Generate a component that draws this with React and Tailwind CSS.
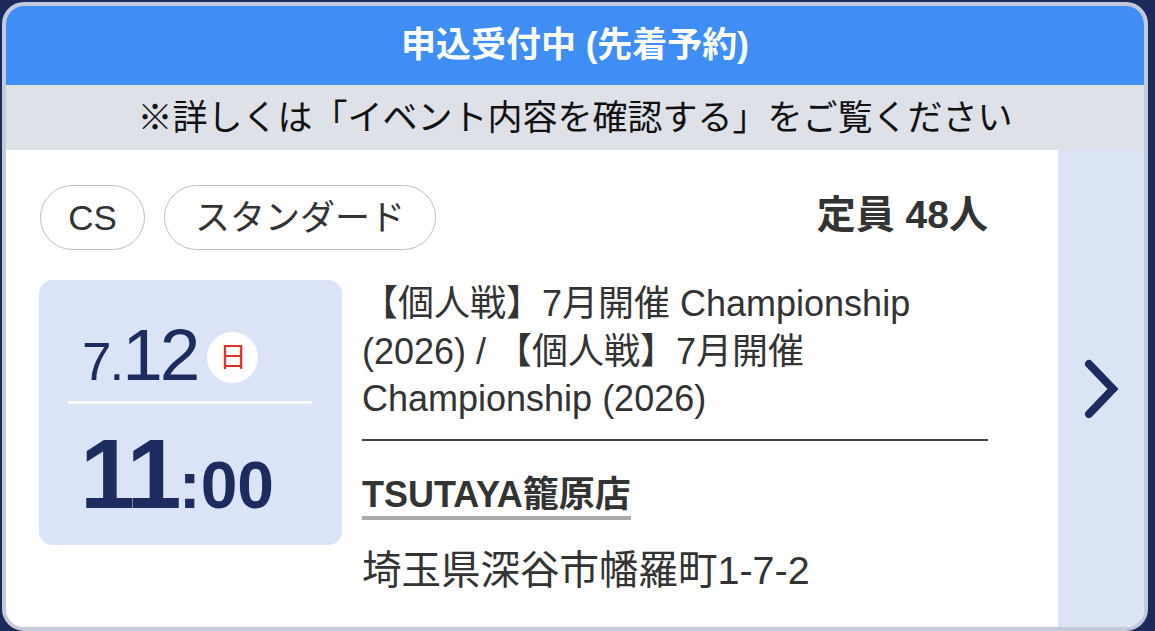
import React from 'react';

// event entry card: status header, notice strip, date block and venue details
const Tag = ({ label, width }) => (
  <div
    className={`flex h-[65px] items-center justify-center rounded-full border-[1.5px] border-[#b9bec9] text-[35px] leading-none text-[#333] ${width}`}
  >
    {label}
  </div>
);

const Chevron = () => (
  <svg width="40" height="62" viewBox="0 0 40 62" fill="none">
    <polyline
      points="8,6 32,31 8,56"
      stroke="#1d2b5e"
      strokeWidth="8"
      strokeLinecap="round"
      strokeLinejoin="miter"
    />
  </svg>
);

const App = () => {
  return (
    <div className="h-[631px] w-[1155px] overflow-hidden bg-[#1c2a5b] pl-[2px] pt-[2px] font-[family-name:'Liberation_Sans','Noto_Sans_CJK_JP',sans-serif]">
      <div className="flex h-[629px] w-[1146px] flex-col overflow-hidden rounded-[22px] border-[4px] border-[#c4cad9] bg-white">
        <div className="flex h-[79px] shrink-0 items-center justify-center bg-[#3e8ef6] text-[35px] font-bold text-white">
          申込受付中 (先着予約)
        </div>
        <div className="flex h-[65px] shrink-0 items-center justify-center bg-[#dfe1e8] pt-[2px] text-[35px] text-[#111]">
          ※詳しくは「イベント内容を確認する」をご覧ください
        </div>

        <div className="flex flex-1">
          <div className="flex-1 pl-[33px] pr-[70px] pt-[35px]">
            {/* tags + capacity */}
            <div className="flex items-center justify-between">
              <div className="flex gap-[19px] pl-[1px]">
                <Tag label="CS" width="w-[105px]" />
                <Tag label="スタンダード" width="w-[272px]" />
              </div>
              <div className="pb-[4px] text-[39px] font-bold text-[#333]">定員 48人</div>
            </div>

            <div className="mt-[30px] flex">
              {/* date block */}
              <div className="h-[265px] w-[303px] shrink-0 rounded-[14px] bg-[#dbe4f6] pt-[38px] text-[#1d2b5e]">
                <div className="flex items-end pl-[43px]">
                  <span className="mb-[4px] text-[53px] leading-none tracking-[-2px]">7.</span>
                  <span className="mb-[1px] text-[73px] leading-none tracking-[-3px]">12</span>
                  <span className="mb-[9px] ml-[10px] flex h-[51px] w-[51px] items-center justify-center rounded-full bg-white text-[28px] leading-none text-[#d8302a]">
                    日
                  </span>
                </div>
                <div className="ml-[29px] mr-[30px] mt-[9px] h-[3px] bg-white" />
                <div className="mt-[20px] flex items-baseline pl-[41px] font-bold">
                  <span className="text-[99px] leading-none tracking-[-3px]">11</span>
                  <span className="text-[66px] leading-none">:00</span>
                </div>
              </div>

              {/* title + venue */}
              <div className="ml-[20px] flex-1 text-[#333]">
                <div className="text-[36px] leading-[47.5px]">
                  【個人戦】7月開催 Championship (2026) / 【個人戦】7月開催 Championship (2026)
                </div>
                <div className="mt-[16px] h-[2px] bg-[#444]" />
                <div className="mt-[32px] inline-block border-b-[4px] border-[#aaa] text-[36px] font-bold leading-[43px]">
                  TSUTAYA籠原店
                </div>
                <div className="mt-[28px] text-[39.5px] leading-[44px]">埼玉県深谷市幡羅町1-7-2</div>
              </div>
            </div>
          </div>

          <div className="flex w-[86px] shrink-0 items-center justify-center bg-[#dbe4f5]">
            <Chevron />
          </div>
        </div>
      </div>
    </div>
  );
};

export default App;
